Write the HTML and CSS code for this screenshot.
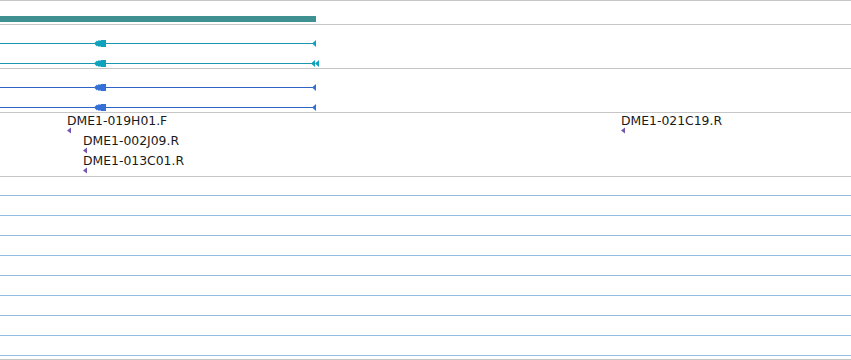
FILE: index.html
```html
<!DOCTYPE html>
<html lang="en">
<head>
    <meta charset="UTF-8">
    <meta name="viewport" content="width=device-width, initial-scale=1.0">
    <title>Track view</title>
    <link rel="stylesheet" href="styles.css">
</head>
<body>
    <div class="tracks">
        <div class="track track-ruler">
            <svg class="canvas" width="851" height="23">
                <rect class="region" x="0" y="15" width="316" height="6"></rect>
            </svg>
        </div>

        <div class="track track-pair">
            <svg class="canvas" width="851" height="43">
                <g class="teal">
                    <line x1="0" y1="18.5" x2="313" y2="18.5"></line>
                    <polygon points="94,18.5 97,15.5 97,16.5 99,15 100,16 101,15 106,15 106,22 101,22 100,21 99,22 97,20.5 97,21.5"></polygon>
                    <polygon points="312,18.5 316,15 316,22"></polygon>

                    <line x1="0" y1="38.5" x2="313" y2="38.5"></line>
                    <polygon points="94,38.5 97,35.5 97,36.5 99,35 100,36 101,35 106,35 106,42 101,42 100,41 99,42 97,40.5 97,41.5"></polygon>
                    <polygon points="311,38.5 315,35 315,42"></polygon>
                    <polygon points="315,38.5 319,35 319,42"></polygon>
                </g>
            </svg>
        </div>

        <div class="track track-pair">
            <svg class="canvas" width="851" height="43">
                <g class="blue">
                    <line x1="0" y1="18.5" x2="313" y2="18.5"></line>
                    <polygon points="94,18.5 97,15.5 97,16.5 99,15 100,16 101,15 106,15 106,22 101,22 100,21 99,22 97,20.5 97,21.5"></polygon>
                    <polygon points="312,18.5 316,15 316,22"></polygon>

                    <line x1="0" y1="38.5" x2="313" y2="38.5"></line>
                    <polygon points="94,38.5 97,35.5 97,36.5 99,35 100,36 101,35 106,35 106,42 101,42 100,41 99,42 97,40.5 97,41.5"></polygon>
                    <polygon points="312,38.5 316,35 316,42"></polygon>
                </g>
            </svg>
        </div>

        <div class="track track-reads">
            <svg class="canvas" width="851" height="63">
                <text class="label" x="67" y="12">DME1-019H01.F</text>
                <polygon class="mark" points="67,17.5 71,14.5 71,20.5"></polygon>

                <text class="label" x="83" y="32">DME1-002J09.R</text>
                <polygon class="mark" points="83,37.5 87,34.5 87,40.5"></polygon>

                <text class="label" x="83" y="52">DME1-013C01.R</text>
                <polygon class="mark" points="83,57.5 87,54.5 87,60.5"></polygon>

                <text class="label" x="621" y="12">DME1-021C19.R</text>
                <polygon class="mark" points="621,17.5 625,14.5 625,20.5"></polygon>
            </svg>
        </div>

        <div class="track track-empty">
            <div class="row first"></div>
            <div class="row"></div>
            <div class="row"></div>
            <div class="row"></div>
            <div class="row"></div>
            <div class="row"></div>
            <div class="row"></div>
            <div class="row"></div>
            <div class="row"></div>
            <div class="row tail"></div>
        </div>
    </div>
</body>
</html>
```
FILE: styles.css
```css
body {
    margin: 0;
    background: #fff;
    font-family: "DejaVu Sans", sans-serif;
    overflow: hidden;
}
.tracks {
    width: 851px;
    border-top: 1px solid #c6c6c6;
}
.track {
    border-bottom: 1px solid #c6c6c6;
}
.canvas {
    display: block;
}
.track-ruler {
    height: 23px;
}
.track-pair {
    height: 43px;
}
.track-reads {
    height: 63px;
}
.region {
    fill: #3f9090;
}
.teal line {
    stroke: #1b97b0;
    stroke-width: 1;
}
.teal polygon {
    fill: #10a2bc;
}
.blue line {
    stroke: #2f63c4;
    stroke-width: 1;
}
.blue polygon {
    fill: #3470d6;
}
.label {
    font-family: "DejaVu Sans", sans-serif;
    font-size: 12.4px;
    fill: #1a1a1a;
}
.mark {
    fill: #7454b4;
}
.row {
    height: 19px;
    border-bottom: 1px solid #93bde0;
}
.row.first {
    height: 18px;
}
.row.tail {
    height: 3px;
    border-bottom: none;
}
```
